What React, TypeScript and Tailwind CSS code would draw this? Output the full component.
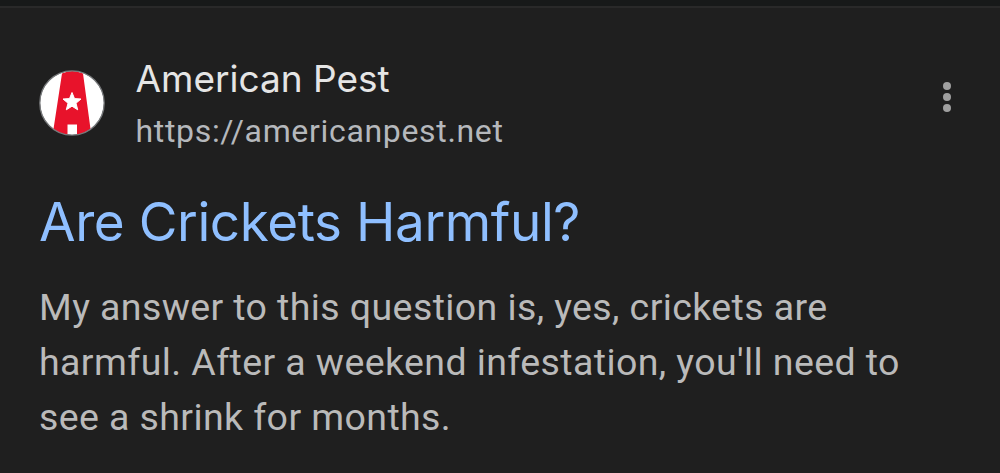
interface SearchResult {
  site: string
  url: string
  title: string
  snippet: string[]
}

const RESULT: SearchResult = {
  site: 'American Pest',
  url: 'https://americanpest.net',
  title: 'Are Crickets Harmful?',
  snippet: [
    'My answer to this question is, yes, crickets are',
    "harmful. After a weekend infestation, you'll need to",
    'see a shrink for months.'
  ]
}

function Favicon() {
  return (
    <svg viewBox="0 0 66 66" className="w-[66px] h-[66px] shrink-0">
      <circle cx="33" cy="33" r="32" fill="#fff" />
      <path d="M23 3.5Q33 -1.5 44 3.5L51.5 59Q44 64 38 65V54.5H28.5V65Q21 64 14.5 59Z" fill="#e8132b" />
      <path d="M33 22.5L35.5 28.6L42 29L37 33.2L38.7 39.8L33 36.2L27.3 39.8L29 33.2L24 29L30.5 28.6Z" fill="#fff" stroke="#fff" />
      <circle cx="33" cy="33" r="32.2" fill="none" stroke="#77797b" strokeWidth="1.3" />
    </svg>
  )
}

function MoreButton() {
  return (
    <button aria-label="More options" className="ml-auto mt-[21px] flex flex-col items-center gap-[3px] w-[31px]">
      <span className="size-2 rounded-full bg-[#9f9f9f]" />
      <span className="size-2 rounded-full bg-[#9f9f9f]" />
      <span className="size-2 rounded-full bg-[#9f9f9f]" />
    </button>
  )
}

function App() {
  return (
    <main className="w-[1000px] h-[473px] overflow-hidden bg-[#1f1f1f] font-['Roboto',sans-serif]">
      <div className="h-2 bg-[#171919] border-b-2 border-[#292929]" />
      <article className="pl-[39px] pr-[38px] pt-[53px]">
        <header className="flex h-[88px] items-start">
          <div className="pt-[9px]">
            <Favicon />
          </div>
          <div className="ml-[30.5px] whitespace-nowrap">
            <div className="font-['Inter',sans-serif] text-[37px] leading-[36px] text-[#e5e5e5]">{RESULT.site}</div>
            <div className="mt-4 text-[32px] leading-[36px] tracking-[0.67px] text-[#b5b8bc]">{RESULT.url}</div>
          </div>
          <MoreButton />
        </header>
        <h1 className="mt-[43px] whitespace-nowrap font-['Inter',sans-serif] text-[53px] leading-[60px] tracking-[-0.42px] text-[#8fbfff]">{RESULT.title}</h1>
        <p className="mt-[28px] whitespace-nowrap text-[37.5px] leading-[55px] tracking-[0.4px] text-[#bababa]">
          {RESULT.snippet.map((line) => (
            <span key={line} className="block">
              {line}
            </span>
          ))}
        </p>
      </article>
    </main>
  )
}

export default App
